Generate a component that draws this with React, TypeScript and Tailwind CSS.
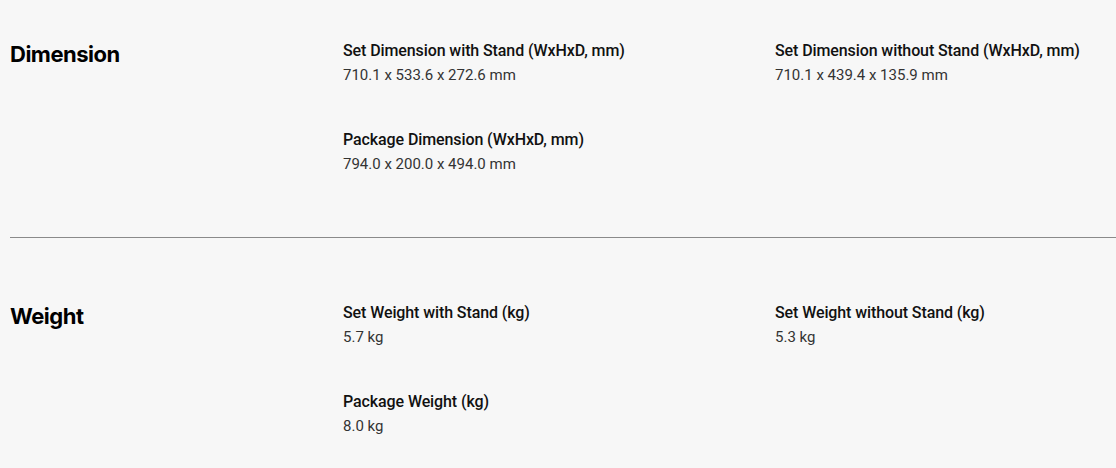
export default function App() {
  const sections = [
    {
      title: 'Dimension',
      specs: [
        { label: 'Set Dimension with Stand (WxHxD, mm)', value: '710.1 x 533.6 x 272.6 mm' },
        { label: 'Set Dimension without Stand (WxHxD, mm)', value: '710.1 x 439.4 x 135.9 mm' },
        { label: 'Package Dimension (WxHxD, mm)', value: '794.0 x 200.0 x 494.0 mm' },
      ],
    },
    {
      title: 'Weight',
      specs: [
        { label: 'Set Weight with Stand (kg)', value: '5.7 kg' },
        { label: 'Set Weight without Stand (kg)', value: '5.3 kg' },
        { label: 'Package Weight (kg)', value: '8.0 kg' },
      ],
    },
  ];

  return (
    <div className="min-h-[468px] w-[1116px] bg-[#f7f7f7] pl-[10px] font-['Roboto',sans-serif]">
      {sections.map((section, i) => (
        <div key={section.title}>
          {i > 0 && <div className="h-px bg-[#8a8a8a]" />}
          <div className={`grid grid-cols-[333px_432px_1fr] ${i === 0 ? 'pt-[39px] pb-[60px]' : 'pt-[63px] pb-[32px]'}`}>
            <h2 className="font-['Inter',sans-serif] text-[22px] font-bold leading-[30px] tracking-[-0.5px] text-black">
              {section.title}
            </h2>
            <div className="col-span-2 grid grid-cols-[432px_1fr] gap-y-[40px]">
              {section.specs.map((spec) => (
                <div key={spec.label}>
                  <div className="text-[16px] font-medium leading-[24px] tracking-[-0.1px] text-[#111]">{spec.label}</div>
                  <div className="text-[15px] leading-[25px] text-[#333]">{spec.value}</div>
                </div>
              ))}
            </div>
          </div>
        </div>
      ))}
    </div>
  );
}
